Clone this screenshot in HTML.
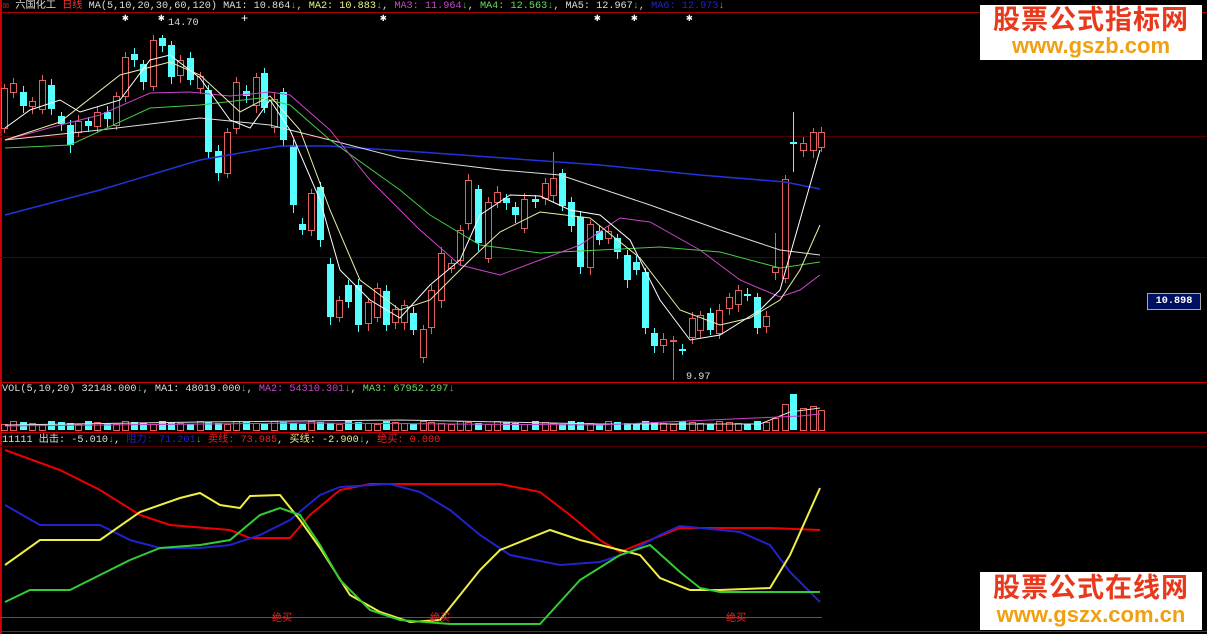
<!DOCTYPE html>
<html><head><meta charset="utf-8"><style>
body{margin:0;background:#000;width:1207px;height:634px;overflow:hidden;position:relative;font-family:"Liberation Mono","Noto Sans CJK SC",monospace;}
.t{position:absolute;font-size:10.2px;white-space:nowrap;color:#ddd;line-height:12px}
.logo{position:absolute;background:#fff;text-align:center;font-family:"Liberation Sans","Noto Sans CJK SC",sans-serif;font-weight:bold}
.logo .a{color:#e8391c;font-size:27px;line-height:30px;letter-spacing:1px}
.logo .b{color:#f0a010;font-size:22px;line-height:22px}
</style></head><body>
<svg id="s" width="1207" height="634" style="position:absolute;left:0;top:0">
<rect x="0" y="0" width="2" height="634" fill="#c00"/>
<line x1="0" y1="12.5" x2="1207" y2="12.5" stroke="#a00"/>
<line x1="0" y1="136.5" x2="1207" y2="136.5" stroke="#500"/>
<line x1="0" y1="257.5" x2="1207" y2="257.5" stroke="#500"/>
<line x1="0" y1="382.5" x2="1207" y2="382.5" stroke="#c00"/>
<line x1="0" y1="432.5" x2="1207" y2="432.5" stroke="#c00"/>
<line x1="0" y1="446.5" x2="1207" y2="446.5" stroke="#500"/>
<line x1="0" y1="631.5" x2="1207" y2="631.5" stroke="#c00"/>
<line x1="0" y1="617.5" x2="822" y2="617.5" stroke="#c0c"/>
<g id="g"></g>
</svg>
<div class="t" style="left:3px;top:1px"><span style="color:#f33">☒</span> 六国化工 <span style="color:#f33">日线</span> MA(5,10,20,30,60,120) MA1: 10.864<span style="color:#3c3">↓</span>, <span style="color:#ee8">MA2: 10.883</span><span style="color:#3c3">↓</span>, <span style="color:#c4c">MA3: 11.964</span><span style="color:#3c3">↓</span>, <span style="color:#6d6">MA4: 12.563</span><span style="color:#3c3">↓</span>, MA5: 12.967<span style="color:#3c3">↓</span>, <span style="color:#22c">MA6: 12.973</span><span style="color:#3c3">↓</span></div>
<div class="t" style="left:168px;top:18px">14.70</div>
<div class="t" style="left:686px;top:372px">9.97</div>
<div class="t" style="left:2px;top:384px">VOL(5,10,20) 32148.000<span style="color:#3c3">↓</span>, MA1: 48019.000<span style="color:#3c3">↓</span>, <span style="color:#c4c">MA2: 54310.301</span><span style="color:#3c3">↓</span>, <span style="color:#6d6">MA3: 67952.297</span><span style="color:#3c3">↓</span></div>
<div class="t" style="left:2px;top:435px">11111 出击: -5.010<span style="color:#3c3">↓</span>, <span style="color:#22c">阻力: 71.201</span><span style="color:#3c3">↓</span> <span style="color:#e22">卖线: 73.985</span>, <span style="color:#ee8">买线: -2.900</span><span style="color:#3c3">↓</span>, <span style="color:#e22">绝买: 0.000</span></div>
<div class="t" style="left:272px;top:614px;color:#e22">绝买</div>
<div class="t" style="left:430px;top:614px;color:#e22">绝买</div>
<div class="t" style="left:726px;top:614px;color:#e22">绝买</div>
<div class="t" style="left:1147px;top:293px;width:52px;height:15px;line-height:15px;background:#001060;border:1px solid #aaa;color:#fff;text-align:center;font-weight:bold">10.898</div>
<div class="logo" style="left:980px;top:5px;width:222px;height:55px"><div class="a">股票公式指标网</div><div class="b">www.gszb.com</div></div>
<div class="logo" style="left:980px;top:572px;width:222px;height:58px"><div class="a" style="line-height:32px">股票公式在线网</div><div class="b">www.gszx.com.cn</div></div>
<script>
var C=[[4,'r',88,128],[13,'r',83,92],[23,'c',92,106],[32,'r',101,106],[42,'r',80,109],[51,'c',85,109],[61,'c',116,124],[70,'c',125,145],[78,'r',121,132],[88,'c',121,126],[97,'r',112,126],[107,'c',112,119],[116,'r',96,125],[125,'r',57,96],[134,'c',54,60],[143,'c',64,82],[153,'r',40,86],[162,'c',38,46],[171,'c',45,77],[180,'r',60,75],[190,'c',58,80],[200,'r',76,88],[208,'c',90,152],[218,'c',151,173],[227,'r',132,173],[236,'r',82,128],[246,'c',91,96],[256,'r',77,105],[264,'c',73,108],[274,'r',99,127],[283,'c',92,140],[293,'c',145,205],[302,'c',224,230],[311,'r',193,230],[320,'c',187,240],[330,'c',264,317],[339,'r',300,317],[348,'c',285,302],[358,'c',285,325],[368,'r',302,323],[377,'r',288,317],[386,'c',291,325],[395,'r',309,322],[404,'r',305,322],[413,'c',313,330],[423,'r',329,357],[431,'r',290,327],[441,'r',253,300],[451,'r',263,268],[460,'r',230,260],[468,'r',180,223],[478,'c',189,243],[488,'r',202,258],[497,'r',192,202],[506,'c',198,203],[515,'c',207,215],[524,'r',199,228],[535,'c',199,202],[545,'r',183,198],[553,'r',178,195],[562,'c',173,206],[571,'c',202,226],[580,'c',217,267],[590,'r',224,267],[599,'c',231,240],[608,'r',231,238],[617,'c',238,252],[627,'c',255,280],[636,'c',262,270],[645,'c',272,328],[654,'c',333,346],[663,'r',339,345],[673,'r',340,341],[682,'c',349,351],[692,'r',318,337],[700,'r',315,330],[710,'c',313,330],[719,'r',310,333],[729,'r',297,308],[738,'r',290,304],[747,'c',294,296],[757,'c',297,328],[766,'r',316,326],[775,'r',267,272],[785,'r',179,278],[793,'c',142,144],[803,'r',143,150],[813,'r',132,150],[821,'r',132,147]];
var BIG={775:12,785:26,793:36,803:22,813:24,821:20};
var h='';
C.forEach(function(c,i){var x=c[0]+.5,col=c[1]=='r'?'#e06060':'#5ff';var hi=c[2]-(i%3+4),lo=c[3]+(i%4+5);
if(c[0]==162)hi=35;if(c[0]==673)lo=380;if(c[0]==682)lo=355;if(c[0]==775)hi=233;if(c[0]==793){hi=112;lo=172;}if(c[0]==553)hi=152;
h+='<line x1="'+x+'" y1="'+hi+'" x2="'+x+'" y2="'+lo+'" stroke="'+col+'"/>';
var hh=Math.max(c[3]-c[2],1);
h+=c[1]=='r'?'<rect x="'+(x-3)+'" y="'+c[2]+'.5" width="6" height="'+hh+'" fill="#000" stroke="'+col+'"/>':'<rect x="'+(x-3.5)+'" y="'+c[2]+'" width="7" height="'+hh+'" fill="'+col+'"/>';
var vh=6+((i*7)%4);if(BIG[c[0]])vh=BIG[c[0]];
h+=c[1]=='r'?'<rect x="'+(x-3)+'" y="'+(430-vh)+'.5" width="6" height="'+vh+'" fill="none" stroke="#e06060"/>':'<rect x="'+(x-3.5)+'" y="'+(430-vh)+'" width="7" height="'+vh+'" fill="#5ff"/>';});
function P(pts,col,w){h+='<polyline fill="none" stroke="'+col+'" stroke-width="'+(w||1)+'" points="'+pts+'"/>';}
P('5,215 100,190 200,160 280,146 330,146 420,152 600,165 700,175 785,182 820,189','#2233dd',1.5);
P('5,140 100,130 200,118 270,125 330,140 400,158 500,170 560,175 650,205 720,230 780,250 820,255','#ddd');
P('5,148 70,145 150,108 200,105 260,98 290,105 330,140 400,190 430,215 480,245 540,253 600,250 660,247 720,252 780,268 820,262','#4c4');
P('5,140 60,125 100,115 150,93 190,92 230,96 270,92 290,95 330,130 370,180 420,230 460,265 500,275 540,260 580,245 620,218 650,222 700,250 740,280 780,297 800,290 820,275','#c4c');
P('5,140 60,122 120,75 170,62 200,75 240,112 270,96 300,130 330,210 360,280 400,310 430,300 470,260 500,232 540,212 590,218 640,258 680,310 720,325 750,318 780,300 800,270 820,225','#eea');
P('5,128 30,110 60,100 80,112 120,100 150,60 170,55 200,78 230,120 250,128 270,100 290,130 320,200 340,270 370,300 400,318 430,285 460,260 480,215 510,195 540,196 570,210 600,215 630,240 660,300 690,340 720,335 760,310 780,290 800,220 820,150','#fff');
P('5,425 200,422 400,420 600,424 760,424 790,412 820,408','#ddd');P('5,426 300,423 600,425 800,416 820,414','#c4c');
P('5,450 60,470 100,490 140,515 170,525 230,530 250,538 290,538 310,515 340,490 370,484 500,484 540,492 570,515 600,540 620,552 650,540 680,528 770,528 820,530','#e00',2);
P('5,505 40,525 100,525 130,540 160,548 200,548 230,545 260,535 290,520 320,495 340,487 390,484 420,492 450,510 480,535 510,555 560,565 600,562 630,552 660,535 680,526 740,532 770,545 790,572 820,602','#22c',2);
P('5,565 40,540 100,540 140,512 180,498 200,493 220,505 240,508 250,496 280,495 300,520 320,548 350,595 380,612 410,622 440,620 460,595 480,570 500,550 550,530 580,540 620,550 640,555 660,578 690,590 720,590 770,588 790,555 820,488','#ee4',2);
P('5,602 30,590 70,590 100,575 130,560 160,548 200,545 230,540 260,515 280,508 300,515 320,545 340,580 370,610 400,620 450,624 540,624 580,580 620,555 650,545 680,572 700,588 720,592 820,592','#3c3',2);
[126,162,384,598,635,690].forEach(function(x){h+='<text x="'+(x-4)+'" y="21" fill="#fff" font-size="11">✱</text>';});
h+='<text x="241" y="22" fill="#fff" font-size="12">+</text>';
document.getElementById('g').innerHTML=h;
</script>
</body></html>
